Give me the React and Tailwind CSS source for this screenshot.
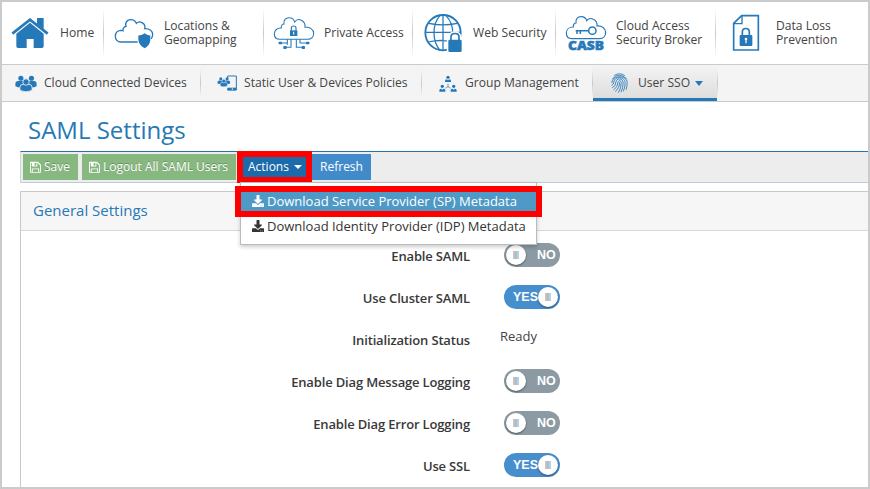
import { FaDownload } from "react-icons/fa";

const BLUE = "#2679b9";

function HomeIcon() {
  return (
    <svg viewBox="33 51 114 96" className="h-8 w-[38px]" fill={BLUE}>
      <path d="M111 54h20v34l-20-16z" />
      <path d="M37 101 90 59l53 42" fill="none" stroke={BLUE} strokeWidth="8" />
      <path d="M49 101 90 68l41 33v38q0 5-5 5h-25v-27H80v27H54q-5 0-5-5z" />
    </svg>
  );
}

function CloudShieldIcon() {
  return (
    <svg viewBox="342 51 123 93" className="h-[31px] w-[41px]" fill="none">
      <path
        d="M413 123h-50c-11 0-17-8-17-17 0-10 7-17 16-18 2 0 5 0 7 1-1-6 3-12 9-13-4-10 3-20 14-20 8 0 14 4 17 11 5-5 12-5 17-2 7 4 10 12 8 18 13-1 24 6 24 18 0 5-2 9-5 12"
        stroke={BLUE}
        strokeWidth="4"
      />
      <path d="M434 97q8 7 17 6v14q-2 17-17 25-16-8-19-25v-14q11 1 19-6z" fill={BLUE} />
    </svg>
  );
}

function PrivateIcon() {
  return (
    <svg viewBox="39 48 126 102" className="h-[34px] w-[42px]" fill="none" stroke={BLUE}>
      <path
        d="M60 118c-11 0-17-7-17-16 0-11 9-19 21-18-1-8 3-12 8-12-2-11 5-19 15-19 9 0 15 5 17 13 5-7 13-9 20-5 8 4 12 12 11 21 14-2 26 6 26 18 0 10-7 18-18 18z"
        strokeWidth="3.2"
      />
      <path d="M94 92v-8c0-8 14-8 14 0v8" strokeWidth="3.5" />
      <path d="M90 91h22v17H90z" fill={BLUE} stroke="none" />
      <path d="M101 95v9" stroke="white" strokeWidth="3" />
      <path d="M82 118v11H61M93 118v24H74M109 118v24h20M120 118v11h22M82 129v5" strokeWidth="3.2" />
      <g fill={BLUE} stroke="none">
        <rect x="56" y="125" width="10" height="8" rx="2" />
        <rect x="70" y="138" width="10" height="9" rx="2" />
        <rect x="125" y="138" width="10" height="9" rx="2" />
        <rect x="138" y="125" width="10" height="8" rx="2" />
      </g>
    </svg>
  );
}

function GlobeIcon() {
  return (
    <svg viewBox="492 39 117 120" className="h-10 w-[39px]" fill="none" stroke={BLUE}>
      <circle cx="549" cy="98" r="53" strokeWidth="5.5" />
      <path
        d="M549 45v106M496 97h106M506 70q43 9 86 0M504 126q40-9 70 0M540 47c-24 26-24 76 0 104M558 47c19 20 21 40 20 55"
        strokeWidth="3.8"
      />
      <path d="M563 119q0-6 5-6v-3c0-18 33-18 33 0v3q6 0 6 6v37h-44z" fill="white" stroke="white" strokeWidth="5" />
      <path d="M573 122v-11c0-14 24-14 24 0v11" strokeWidth="5" />
      <rect x="565" y="119" width="40" height="37" rx="4" fill={BLUE} stroke="none" />
    </svg>
  );
}

function CasbIcon() {
  return (
    <svg viewBox="45 45 126 108" className="h-9 w-[42px] overflow-visible" fill="none" stroke={BLUE}>
      <path
        d="M66 116c-11 0-17-7-17-17 0-11 9-18 21-18-1-7 3-12 8-12-2-12 5-19 15-19 9 0 15 5 17 12 5-6 13-8 20-4 8 4 12 12 11 20 14-2 26 7 26 19 0 11-7 19-18 19z"
        strokeWidth="3.5"
      />
      <circle cx="127" cy="92" r="11" strokeWidth="4.5" />
      <path d="M77 92h39M81 92v10M91 92v10" strokeWidth="4.5" />
      <text
        x="54"
        y="150"
        textLength="108"
        lengthAdjust="spacingAndGlyphs"
        fill={BLUE}
        strokeWidth="1.5"
        className="font-['Open_Sans',sans-serif] text-[35px] font-extrabold"
      >
        CASB
      </text>
    </svg>
  );
}

function DlpIcon() {
  return (
    <svg viewBox="546 42 84 114" className="h-[38px] w-7" fill="none" stroke={BLUE}>
      <path d="M551 70v80h74V47h-50z" strokeWidth="5" />
      <path d="M576 48v23h-24" strokeWidth="4" />
      <path d="M577 107V96c0-14 21-14 21 0v11" strokeWidth="5" />
      <rect x="569" y="105" width="38" height="33" rx="3" fill={BLUE} stroke="none" />
      <path d="M588 118v12" stroke="white" strokeWidth="3.5" />
      <circle cx="588" cy="117" r="4" fill="white" stroke="none" />
    </svg>
  );
}

function Trio() {
  return (
    <>
      <circle cx="62" cy="232" r="8" />
      <circle cx="95" cy="232" r="8" />
      <path d="M45 257v-8q0-8 9-8h16q7 0 7 8v8q-16 8-32 0zM80 257v-8q0-8 7-8h16q8 0 8 8v8q-15 8-31 0z" />
      <g stroke="#f4f4f4" strokeWidth="2.5">
        <path d="M59 270v-9q0-10 10-10h18q10 0 10 10v9q-19 9-38 0z" />
        <circle cx="78" cy="244" r="10" />
      </g>
    </>
  );
}

function PeopleIcon() {
  return (
    <svg viewBox="45 222 66 53" className="h-[17px] w-[22px]" fill={BLUE}>
      <Trio />
    </svg>
  );
}

function StaticIcon() {
  return (
    <svg viewBox="651 225 60 48" className="h-4 w-5" fill={BLUE}>
      <path d="M683 240v-12h26v42h-26v-5" fill="none" stroke={BLUE} strokeWidth="3" />
      <path d="M683 263h26v8h-26z" />
      <circle cx="697" cy="267" r="2" fill="white" />
      <g transform="translate(627 104) scale(.57)">
        <Trio />
      </g>
    </svg>
  );
}

function GroupIcon() {
  return (
    <svg viewBox="537 222 54 51" className="h-[17px] w-[18px]" fill={BLUE}>
      <path d="M564 248v10M564 257l-8 5M564 257l8 5" stroke={BLUE} strokeWidth="2" />
      <circle cx="564" cy="229" r="5" />
      <path d="M555 243v-3q0-5 5-5l4 3 4-3q5 0 5 5v3z" />
      <circle cx="547" cy="256" r="5" />
      <path d="M538 272v-4q0-5 5-5l4 3 4-3q5 0 5 5v4z" />
      <circle cx="581" cy="256" r="5" />
      <path d="M572 272v-4q0-5 5-5l4 3 4-3q5 0 5 5v4z" />
    </svg>
  );
}

function FingerprintIcon() {
  return (
    <svg
      viewBox="0 0 50 60"
      className="h-5 w-[17px] shrink-0"
      fill="none"
      stroke={BLUE}
      strokeWidth="2.6"
      strokeLinecap="round"
    >
      <path d="M10 7Q25-3 40 7M4 17Q24-5 46 17M2 29C1 5 49 5 48 29q0 12-3 20M2 37q7-3 6-10C9 9 41 10 42 28q0 15-5 26M4 44q11-5 10-16c1-14 21-13 22 0q0 17-6 29M8 50q13-8 12-21c1-8 10-8 10 0q1 17-8 29M13 55q13-10 12-26" />
    </svg>
  );
}

function SaveIcon() {
  return (
    <svg viewBox="0 0 1536 1792" className="h-[13px] w-[11px] shrink-0" fill="currentColor">
      <path d="M384 1536h768v-384h-768v384zm896 0h128v-896q0-14-10-38.5t-20-34.5l-281-281q-10-10-34-20t-39-10v416q0 40-28 68t-68 28h-576q-40 0-68-28t-28-68v-416h-128v1280h128v-416q0-40 28-68t68-28h832q40 0 68 28t28 68v416zm-384-928v-320q0-13-9.5-22.5t-22.5-9.5h-192q-13 0-22.5 9.5t-9.5 22.5v320q0 13 9.5 22.5t22.5 9.5h192q13 0 22.5-9.5t9.5-22.5zm640 32v896q0 40-28 68t-68 28h-1344q-40 0-68-28t-28-68v-1344q0-40 28-68t68-28h928q40 0 88 20t76 48l280 280q28 28 48 76t20 88z" />
    </svg>
  );
}

function Divider({ className = "" }) {
  return <div className={`w-px shrink-0 bg-linear-to-b from-transparent via-[#c8c8c8] to-transparent ${className}`} />;
}

function NavItem({ className, iconClass, icon, children }) {
  return (
    <div className={`flex shrink-0 items-center ${className}`}>
      <div className={`shrink-0 ${iconClass}`}>{icon}</div>
      <div className="pb-px text-[12.1px] leading-[14px] whitespace-nowrap">{children}</div>
    </div>
  );
}

function Toggle({ on }) {
  return (
    <div
      className={`flex h-6 w-14 items-center rounded-full px-[2px] font-['Liberation_Sans',sans-serif] text-[12.5px] font-bold text-white ${
        on ? "bg-[#468fcc]" : "flex-row-reverse bg-[#8b9aa3]"
      }`}
    >
      <span className={on ? "w-8 pl-[7px]" : "w-8 pl-[11px]"}>{on ? "YES" : "NO"}</span>
      <span className="flex size-5 shrink-0 items-center justify-center rounded-full bg-white shadow-[0_1px_2px_rgba(0,0,0,0.45)]">
        <i className="h-2 w-[2px] bg-[#cdbfbd]" />
        <i className="h-2 w-[2px] bg-[#a9bfcd]" />
        <i className="h-2 w-[2px] bg-[#b5d3e3]" />
      </span>
    </div>
  );
}

const rows = [
  { label: "Enable SAML", on: false },
  { label: "Use Cluster SAML", on: true },
  { label: "Initialization Status", text: "Ready" },
  { label: "Enable Diag Message Logging", on: false },
  { label: "Enable Diag Error Logging", on: false },
  { label: "Use SSL", on: true },
];

export default function App() {
  return (
    <div className="flex h-[489px] w-[870px] flex-col overflow-hidden border-2 border-[#cbcbcb] bg-white font-['Open_Sans',sans-serif] text-[13px] text-[#444]">
      <nav className="flex h-[63px] shrink-0 border-b border-[#cbcbcb]">
        <NavItem className="w-[101px] pl-[9px]" iconClass="w-[49px]" icon={<HomeIcon />}>Home</NavItem>
        <Divider className="my-1.5" />
        <NavItem className="w-[159px] pl-[10px]" iconClass="w-[50px]" icon={<CloudShieldIcon />}>
          Locations &amp;<br />Geomapping
        </NavItem>
        <Divider className="my-1.5" />
        <NavItem className="w-[148px] pl-[9px]" iconClass="w-[51px]" icon={<PrivateIcon />}>Private Access</NavItem>
        <Divider className="my-1.5" />
        <NavItem className="w-[142px] pl-[11px]" iconClass="w-[49px]" icon={<GlobeIcon />}>Web Security</NavItem>
        <Divider className="my-1.5" />
        <NavItem className="w-[159px] pl-[9px]" iconClass="w-[51px]" icon={<CasbIcon />}>
          Cloud Access<br />Security Broker
        </NavItem>
        <Divider className="my-1.5" />
        <NavItem className="w-[150px] pl-4" iconClass="w-11" icon={<DlpIcon />}>
          Data Loss<br />Prevention
        </NavItem>
      </nav>

      <nav className="flex h-[37px] shrink-0 border-b border-[#cbcbcb] bg-[#f4f4f4]">
        <NavItem className="w-[198px] pl-[13px]" iconClass="w-[29px]" icon={<PeopleIcon />}>Cloud Connected Devices</NavItem>
        <Divider className="my-1" />
        <NavItem className="w-[220px] pl-4" iconClass="w-[27px]" icon={<StaticIcon />}>Static User &amp; Devices Policies</NavItem>
        <Divider className="my-1" />
        <NavItem className="w-[170px] pl-[17px]" iconClass="w-[26px]" icon={<GroupIcon />}>Group Management</NavItem>
        <Divider className="my-1" />
        <div className="flex w-[124px] items-center border-b-[3px] border-[#2679b9] bg-linear-to-b from-[#f4f4f4] to-[#dedede] pt-[2px] pl-[18px]">
          <FingerprintIcon />
          <span className="ml-[10px] text-[12.1px] leading-[14px] whitespace-nowrap">User SSO</span>
          <i className="mt-px ml-[5px] border-x-4 border-t-[5px] border-x-transparent border-t-[#2679b9]" />
        </div>
        <Divider className="my-1" />
      </nav>

      <main className="flex min-h-0 flex-1 flex-col pl-[18px]">
        <h1 className="h-[49px] shrink-0 pt-3 pl-2 text-2xl leading-8 text-[#2679b5]">SAML Settings</h1>

        <div className="flex h-8 shrink-0 border-t border-b border-l border-t-[#2a72ac] border-b-[#bdcbd9] border-l-[#ccd4dc] bg-[#ededed] pt-[2px] pl-[2px] text-[12px] text-white">
          <button className="mr-1 flex h-[26px] w-[55px] items-center gap-[3px] bg-[#87b87f] pl-[7px] [text-shadow:0_-1px_0_rgba(0,0,0,0.25)]">
            <SaveIcon />Save
          </button>
          <button className="mr-1 flex h-[26px] w-[154px] items-center gap-[3px] bg-[#87b87f] pl-[7px] whitespace-nowrap [text-shadow:0_-1px_0_rgba(0,0,0,0.25)]">
            <SaveIcon />Logout All SAML Users
          </button>
          <div className="relative mr-1 h-[26px] w-[68px]">
            <button className="flex h-full w-full items-center bg-[#1b6aaa] pl-2">
              Actions
              <i className="ml-[5px] border-x-4 border-t-4 border-x-transparent border-t-white" />
            </button>
            <div className="absolute -top-[3px] -left-[3px] h-8 w-[75px] border-6 border-[#fe0000]" />
            <div className="absolute top-7 left-0 z-10 h-[63px] w-[297px] border border-[#bbb] bg-white pt-[9px] text-[13px] text-[#333] shadow-[0_2px_4px_rgba(0,0,0,0.2)]">
              <div className="relative flex h-[19px] items-center bg-[#4f99c6] pl-[11px] whitespace-nowrap text-white">
                <FaDownload className="mr-[3px] mb-0.5 size-3" />
                Download Service Provider (SP) Metadata
                <div className="absolute -top-[6px] -left-[6px] h-[31px] w-[307px] border-6 border-[#fe0000]" />
              </div>
              <div className="mt-[6px] flex h-5 items-center pl-[11px] whitespace-nowrap">
                <FaDownload className="mr-[3px] mb-0.5 size-3" />
                Download Identity Provider (IDP) Metadata
              </div>
            </div>
          </div>
          <button className="h-[26px] w-[59px] bg-[#428bca]">Refresh</button>
        </div>

        <section className="mt-2 flex-1 border-t border-l border-[#c8c8c8]">
          <h2 className="flex h-[39px] items-center border-b border-[#d9d9d9] bg-[#f6f6f6] pb-px pl-3 text-[15px] text-[#2679b5]">
            General Settings
          </h2>
          <div className="pt-[3px]">
            {rows.map((r) => (
              <div key={r.label} className="flex h-[42px] items-center">
                <label className="w-[449px] pt-1 text-right text-[13px] font-semibold tracking-[-0.16px] text-[#393939]">
                  {r.label}
                </label>
                {r.text ? <span className="ml-[30px] pb-1">{r.text}</span> : <div className="ml-[34px]"><Toggle on={r.on} /></div>}
              </div>
            ))}
          </div>
        </section>
      </main>
    </div>
  );
}
